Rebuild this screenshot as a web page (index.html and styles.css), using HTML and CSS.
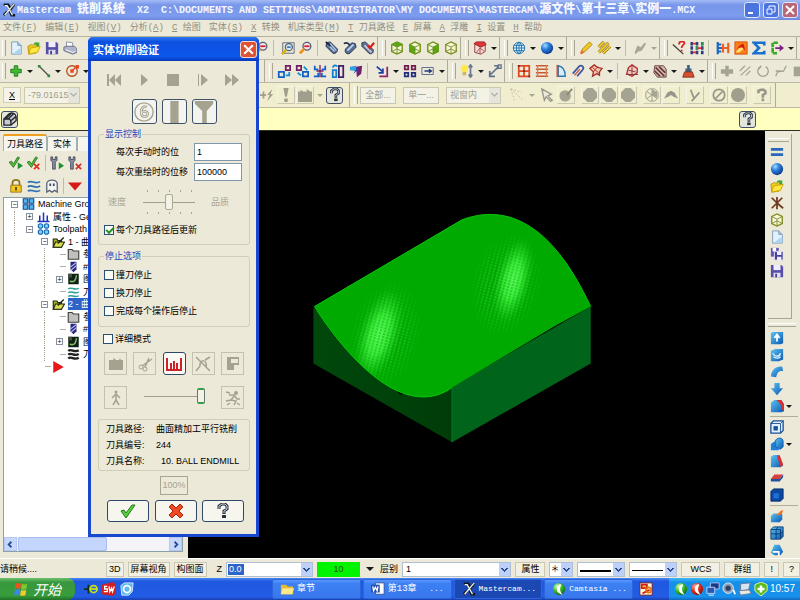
FILE: index.html
```html
<!DOCTYPE html>
<html lang="zh-CN">
<head>
<meta charset="utf-8">
<title>Mastercam 铣削系统 X2</title>
<link rel="stylesheet" href="styles.css">
</head>
<body>
<svg class="sprite" aria-hidden="true">
<defs>
<linearGradient id="gb" x1="0" y1="0" x2="1" y2="1"><stop offset="0" stop-color="#5cc4f4"/><stop offset="1" stop-color="#0a58b0"/></linearGradient>
<radialGradient id="gs" cx=".35" cy=".3" r=".8"><stop offset="0" stop-color="#a8dcff"/><stop offset=".4" stop-color="#2a80dc"/><stop offset="1" stop-color="#0a2c80"/></radialGradient>
<radialGradient id="gg" cx=".35" cy=".3" r=".8"><stop offset="0" stop-color="#d0ffb0"/><stop offset=".5" stop-color="#38b828"/><stop offset="1" stop-color="#106010"/></radialGradient>
<radialGradient id="gr" cx=".35" cy=".3" r=".8"><stop offset="0" stop-color="#ffb0a0"/><stop offset=".5" stop-color="#e02818"/><stop offset="1" stop-color="#801008"/></radialGradient>
</defs>
<symbol id="new" viewBox="0 0 16 16"><path d="M3 1h7l4 4v10H3z" fill="#e2f2fc" stroke="#7898b8"/><path d="M10 1v4h4" fill="#a8cce8" stroke="#7898b8"/><path d="M5 14h8V8z" fill="#a8d4f4"/></symbol>
<symbol id="open" viewBox="0 0 16 16"><path d="M1 6l4-2 2 1 5-2 1 4-3 7-8 1z" fill="#f0cc20" stroke="#b89010"/><path d="M4 8l11-2-3 7-10 2z" fill="#ffe83c" stroke="#c8a010"/><path d="M7 4c2-3 4-3 6-2l1-1v5h-4l1-2c-1-1-2 0-4 0" fill="#38a838"/></symbol>
<symbol id="save" viewBox="0 0 16 16"><path d="M1 1h12l2 2v12H1z" fill="#5850a8"/><path d="M4 1h8v6H4z" fill="#eef"/><path d="M4 10h8v5H4z" fill="#dde"/><path d="M6 11h2v4H6z" fill="#443c90"/></symbol>
<symbol id="saves" viewBox="0 0 16 16"><path d="M1 1h9v10H1z" fill="#6058b8"/><path d="M3 1h4v4H3z" fill="#fff"/><path d="M5 5h10v10H5z" fill="#4840a0" stroke="#eee"/><path d="M8 5h5v4H8zM8 11h5v4H8z" fill="#eef"/></symbol>
<symbol id="print" viewBox="0 0 16 16"><path d="M4 1l7 1v6H4z" fill="#fff" stroke="#8088a8"/><path d="M1 7l3-1h9l3 3v4l-5 2-10-4z" fill="#b0b4c8" stroke="#606880"/><path d="M3 10l8 3 3-1" stroke="#fff" fill="none"/></symbol>
<symbol id="zoomr" viewBox="0 0 16 16"><circle cx="9" cy="6" r="4.500" fill="#f4e4f0" stroke="#506078" stroke-width="1.500"/><path d="M6 9l-5 5" stroke="#f09010" stroke-width="3"/><path d="M6 6h6" stroke="#d02020" stroke-width="2"/></symbol>
<symbol id="zoomw" viewBox="0 0 16 16"><path d="M2 2h13v12H2z" fill="none" stroke="#506078"/><circle cx="9" cy="7" r="4" fill="#d4e8f4" stroke="#506078" stroke-width="1.500"/><path d="M6 10l-5 5" stroke="#e0b010" stroke-width="3"/><path d="M7 7h4" stroke="#2050a0" stroke-width="1.500"/></symbol>
<symbol id="torch" viewBox="0 0 16 16"><path d="M2 2l4-1 8 8c1 3-2 6-5 5L1 6z" fill="#506890" stroke="#20304c"/><path d="M3 4l8 8M6 3l7 8" stroke="#b8cce8" stroke-width="1.500"/><path d="M1 1l5 5" stroke="#182440" stroke-width="2"/></symbol>
<symbol id="torch2" viewBox="0 0 16 16"><path d="M3 9l7-7 4 1 1 4-7 7c-3 2-7-1-5-5z" fill="#587098" stroke="#20304c"/><path d="M5 11l7-7" stroke="#c4d8f0" stroke-width="2"/><path d="M1 3c3-2 5-1 7 2" fill="none" stroke="#20304c" stroke-width="2"/></symbol>
<symbol id="torch3" viewBox="0 0 16 16"><path d="M1 2l4-1 9 9c1 3-2 6-5 4L1 6z" fill="#607090" stroke="#283850"/><path d="M4 5l8 8" stroke="#ccd" stroke-width="2"/><path d="M8 5l2 3 5-6" stroke="#d82020" stroke-width="2.500" fill="none"/></symbol>
<symbol id="cubet" viewBox="0 0 16 16"><path d="M2 4l6-3 6 3v8l-6 3-6-3z" fill="#f2f4d8" stroke="#6c8c10" stroke-width="1.500"/><path d="M2 4l6-3 6 3-6 3z" fill="#58a818"/><path d="M2 4l6 3 6-3M8 7v8M2 12l6-3 6 3" fill="none" stroke="#6c8c10"/></symbol>
<symbol id="cubel" viewBox="0 0 16 16"><path d="M2 4l6-3 6 3v8l-6 3-6-3z" fill="#f2f4d8" stroke="#6c8c10" stroke-width="1.500"/><path d="M2 4l6 3v8l-6-3z" fill="#58a818"/><path d="M2 4l6 3 6-3M8 7v8M2 12l6-3 6 3" fill="none" stroke="#6c8c10"/></symbol>
<symbol id="cuber" viewBox="0 0 16 16"><path d="M2 4l6-3 6 3v8l-6 3-6-3z" fill="#f2f4d8" stroke="#6c8c10" stroke-width="1.500"/><path d="M14 4L8 7v8l6-3z" fill="#58a818"/><path d="M2 4l6 3 6-3M8 7v8M2 12l6-3 6 3" fill="none" stroke="#6c8c10"/></symbol>
<symbol id="cube" viewBox="0 0 16 16"><path d="M2 4l6-3 6 3v8l-6 3-6-3z" fill="#f6f6dc" stroke="#7c8c20" stroke-width="1.500"/><path d="M2 4l6 3 6-3M8 7v8M2 12l6-3 6 3" fill="none" stroke="#7c8c20"/></symbol>
<symbol id="cubered" viewBox="0 0 16 16"><path d="M2 4h12v8l-5 3-7-2z" fill="#f4dcd8" stroke="#903030"/><path d="M1 3l3-2h9l2 3-6 3z" fill="#e03838" stroke="#902020"/><path d="M8 7v8M4 13l4-5 5 4" fill="none" stroke="#a04848"/></symbol>
<symbol id="globe" viewBox="0 0 16 16"><circle cx="8" cy="8" r="6.500" fill="#dff0fa" stroke="#1870a8"/><ellipse cx="8" cy="8" rx="3" ry="6.500" fill="none" stroke="#1870a8"/><path d="M2 5h12M1 8h14M2 11h12M8 1v14" stroke="#1870a8"/></symbol>
<symbol id="ball" viewBox="0 0 16 16"><circle cx="8" cy="8" r="7" fill="url(#gs)"/></symbol>
<symbol id="pen" viewBox="0 0 16 16"><path d="M12 1l3 3-8 8-4 2 1-5z" fill="#f0c820" stroke="#a88010"/><path d="M3 10l3 3-3 2-2-1z" fill="#e87030"/></symbol>
<symbol id="pens" viewBox="0 0 16 16"><path d="M2 7l6-6M2 13L13 2M7 14l8-8" stroke="#987010" stroke-width="3.500"/><path d="M2 7l6-6M2 13L13 2M7 14l8-8" stroke="#f4d430" stroke-width="2"/></symbol>
<symbol id="gpen" viewBox="0 0 16 16"><path d="M2 13l3-8 4 2 4-5 2 1-5 8-4 1-3 3z" fill="#a8a694"/></symbol>
<symbol id="qline" viewBox="0 0 16 16"><path d="M1 4l12 11" stroke="#484030" stroke-width="1.500"/><path d="M8 4c0-5 7-4 6-1-1 2-3 2-3 5M11 10v2" fill="none" stroke="#d82020" stroke-width="2"/></symbol>
<symbol id="bars" viewBox="0 0 16 16"><path d="M2 1v14M8 1v14M14 1v14" stroke="#303c80" stroke-width="3" stroke-dasharray="4 1"/><path d="M3 3h4M9 8h4M3 13h4" stroke="#e03030" stroke-width="2"/><path d="M8 6v4M14 1v4" stroke="#30a050" stroke-width="2"/></symbol>
<symbol id="barsb" viewBox="0 0 16 16"><path d="M2 1v14M2 4h4M2 8h11M2 12h4" stroke="#1868c8" stroke-width="2.500"/><path d="M8 3v10M14 2v12M8 8h6" stroke="#f06020" stroke-width="2.500"/></symbol>
<symbol id="swoosh" viewBox="0 0 16 16"><path d="M1 1h14v14H1z" fill="#f88018" stroke="#d84808"/><path d="M3 12c1-6 4-8 8-9l2 8-4-4z" fill="#d81c10"/><path d="M2 13c3-6 6-7 9-4l-5 4z" fill="#ffe070"/></symbol>
<symbol id="sigma" viewBox="0 0 16 16"><path d="M14 5V2H2l6 6-6 6h12v-3" fill="none" stroke="#1870d0" stroke-width="3"/></symbol>
<symbol id="exit" viewBox="0 0 16 16"><path d="M9 2H3v12h6" fill="none" stroke="#38a828" stroke-width="3" stroke-dasharray="5 1"/><path d="M6 7h5V4l5 4-5 4V9H6z" fill="#802080"/></symbol>
<symbol id="plus" viewBox="0 0 16 16"><path d="M6 2h4v4h4v4h-4v4H6v-4H2V6h4z" fill="#40b830" stroke="#187818"/></symbol>
<symbol id="line" viewBox="0 0 16 16"><path d="M2 2l12 12" stroke="#405048" stroke-width="1.500"/><path d="M1 1h3v3H1zM12 12h3v3h-3z" fill="#308840"/></symbol>
<symbol id="arc" viewBox="0 0 16 16"><circle cx="8" cy="8" r="6" fill="none" stroke="#b05020" stroke-width="1.500"/><path d="M8 8l5-5" stroke="#e03020" stroke-width="1.500"/><path d="M6 6h4v4H6zM12 1h4v4h-4z" fill="#f04820"/></symbol>
<symbol id="x1" viewBox="0 0 16 16"><path d="M2 9h6v6H2z" fill="none" stroke="#1060c8" stroke-width="2"/><path d="M10 2h5v5h-5z" fill="none" stroke="#702060" stroke-width="2"/><path d="M14 9v4h-4" fill="none" stroke="#1090d0" stroke-width="2"/></symbol>
<symbol id="x2" viewBox="0 0 16 16"><path d="M2 2h5v5H2z" fill="none" stroke="#702060" stroke-width="2"/><path d="M9 9h6v5H9z" fill="none" stroke="#1060c8" stroke-width="2"/><path d="M3 10l4 3M10 3l4 4" stroke="#1090d0" stroke-width="2"/></symbol>
<symbol id="x3" viewBox="0 0 16 16"><path d="M2 2v4h4M14 2v4h-4M1 14h5v-4M15 14h-5v-4" fill="none" stroke="#1060c8" stroke-width="2"/><path d="M8 1v14M4 8h8" stroke="#702060" stroke-width="1.500"/></symbol>
<symbol id="x4" viewBox="0 0 16 16"><path d="M2 7h4v8H2zM2 4c1-3 4-3 5-1" fill="none" stroke="#1080d0" stroke-width="2"/><path d="M9 2h5v13H9z" fill="none" stroke="#402070" stroke-width="2"/></symbol>
<symbol id="x5" viewBox="0 0 16 16"><path d="M1 3l7-1v6L1 7z" fill="#30a0e0"/><path d="M8 3l7-1-1 9-5 4z" fill="#702070"/><path d="M5 11l4-7 2 2z" fill="#1050b0"/></symbol>
<symbol id="x6" viewBox="0 0 16 16"><path d="M2 3l7 6M9 5v5H4" fill="none" stroke="#1840a0" stroke-width="2"/><path d="M14 3v11H5" fill="none" stroke="#902070" stroke-width="2"/></symbol>
<symbol id="x7" viewBox="0 0 16 16"><path d="M2 2h4v4H2zM10 2h4v4h-4z" fill="none" stroke="#702050" stroke-width="2"/><path d="M2 10h4v4H2zM10 10h4v4h-4z" fill="none" stroke="#203080" stroke-width="2"/></symbol>
<symbol id="x8" viewBox="0 0 16 16"><path d="M1 4h13v8H1z" fill="none" stroke="#506088"/><path d="M4 8h7M9 6l3 2-3 2" fill="none" stroke="#203880" stroke-width="1.500"/></symbol>
<symbol id="bulb" viewBox="0 0 16 16"><circle cx="5" cy="5" r="4" fill="#ffe840"/><path d="M3 9h4v4H3z" fill="#d0b860"/><path d="M12 2v12M10 4l2-3 2 3M10 12l2 3 2-3" fill="none" stroke="#707890" stroke-width="2"/></symbol>
<symbol id="movexy" viewBox="0 0 16 16"><path d="M11 4L3 12M2 8v6h6" fill="none" stroke="#607088" stroke-width="2"/><path d="M7 2h4v4M12 1h3v4h-3z" fill="none" stroke="#607088" stroke-width="1.500"/></symbol>
<symbol id="s1" viewBox="0 0 16 16"><path d="M2 2h12v12H2zM8 2v12M2 8h12" fill="none" stroke="#e04820" stroke-width="2"/><path d="M7 7h2v2H7zM1 1h2v2H1zM13 13h2v2h-2z" fill="#702020"/></symbol>
<symbol id="s2" viewBox="0 0 16 16"><path d="M1 2h14M1 6h14M1 10h14M1 14h14" stroke="#c85830" stroke-width="1.500"/><path d="M3 1v14M13 1v14" stroke="#d88050" stroke-width="1.500"/></symbol>
<symbol id="s3" viewBox="0 0 16 16"><path d="M6 2c6 1 8 6 8 12H6z" fill="#d8ecf8" stroke="#2878b0" stroke-width="1.500"/><path d="M5 1v14" stroke="#d05030" stroke-width="2"/></symbol>
<symbol id="s4" viewBox="0 0 16 16"><path d="M2 11L9 3c3-3 7 1 4 4l-6 7" fill="none" stroke="#4058a0" stroke-width="2"/><path d="M4 13l6-7" stroke="#d05040" stroke-width="1.500"/></symbol>
<symbol id="s5" viewBox="0 0 16 16"><path d="M1 5l5-4 4 3 5 1-3 4v4l-3-2-5 3 1-5z" fill="#f0c8b0" stroke="#a83028" stroke-width="1.500"/><path d="M4 4l8 7M5 9l5-6" stroke="#a83028"/></symbol>
<symbol id="s6" viewBox="0 0 16 16"><path d="M4 4l4-3 6 4v5l-6 4-6-3z" fill="#f0c8c0" stroke="#b03030" stroke-width="1.500"/><path d="M1 12h14M4 7l8 2M8 2v11" stroke="#803030"/></symbol>
<symbol id="s7" viewBox="0 0 16 16"><path d="M2 2h10l3 4v9H5l-4-5z" fill="#d8b8b0" stroke="#603838"/><path d="M3 4l10 10M7 3l7 7M2 8l6 6" stroke="#603838" stroke-width="2"/></symbol>
<symbol id="s8" viewBox="0 0 16 16"><path d="M7 1h3v4h2v4H5V5h2z" fill="#406080"/><path d="M4 9h9l2 6H2z" fill="#d85030" stroke="#803018"/></symbol>
<symbol id="g1" viewBox="0 0 16 16"><path d="M6 2h4v4h5v5h-5v3H6v-3H1V6h5z" fill="#a5a392"/></symbol>
<symbol id="g2" viewBox="0 0 16 16"><path d="M2 8l6-6M3 13L14 3M9 13l5-5" stroke="#a5a392" stroke-width="1.500"/></symbol>
<symbol id="g3" viewBox="0 0 16 16"><path d="M5 3a6 6 0 1 0 6 0M3 6l3-4" fill="none" stroke="#a5a392" stroke-width="1.500"/></symbol>
<symbol id="g4" viewBox="0 0 16 16"><path d="M2 14c2-7 4-5 9-6l3-6M2 8h6" fill="none" stroke="#a5a392" stroke-width="1.500"/></symbol>
<symbol id="g5" viewBox="0 0 16 16"><path d="M2 3h12v11H2z" fill="#a5a392"/></symbol>
<symbol id="bolt" viewBox="0 0 16 16"><path d="M0 7h3V4h2v3h2v2H5v3H3V9H0zM14 1L8 8h3l-3 7 7-8h-3z" fill="#a09e8c"/></symbol>
<symbol id="bang" viewBox="0 0 16 16"><path d="M5 0h6l-2 10H7zM6 12h4v4H6z" fill="#a09e8c"/></symbol>
<symbol id="clip" viewBox="0 0 16 16"><path d="M0 4h3V2l3 2h4V1l4 3h2v12H0z" fill="#a09e8c"/></symbol>
<symbol id="help" viewBox="0 0 16 16"><path d="M4 6V3l3-2h3l2 2v3L9 8v3" fill="none" stroke="#28303c" stroke-width="3"/><path d="M4 6V3l3-2h3l2 2v3L9 8v2" fill="none" stroke="#c8d4e8"/><path d="M7 12h4v3H7z" fill="#28303c"/></symbol>
<symbol id="cursor" viewBox="0 0 16 16"><path d="M2 1l11 6-4 2 5 5-2 1-5-5-2 4z" fill="#ece9d8" stroke="#98968a" stroke-width="1.500"/></symbol>
<symbol id="hex" viewBox="0 0 16 16"><path d="M5 0h6l5 5v6l-5 5H5l-5-5V5z" fill="#a5a392"/></symbol>
<symbol id="hexp" viewBox="0 0 16 16"><circle cx="7" cy="9" r="6.500" fill="#a5a392"/><path d="M9 8l6-7" stroke="#88867a" stroke-width="2"/></symbol>
<symbol id="pie" viewBox="0 0 16 16"><path d="M5 1h6l4 4v6l-4 4H5l-4-4V5zM8 1v14M2 4l12 8M14 4L2 12" fill="none" stroke="#98968a"/><path d="M8 8V1l6 4v6z" fill="#a5a392"/></symbol>
<symbol id="cap" viewBox="0 0 16 16"><path d="M0 12l4-7 4-2 4 2 4 7-5-2-3-2-3 2z" fill="#98968a"/></symbol>
<symbol id="tri" viewBox="0 0 16 16"><path d="M3 2l4 10 6-7M7 12l-3 3" fill="none" stroke="#98968a" stroke-width="2"/></symbol>
<symbol id="no" viewBox="0 0 16 16"><circle cx="8" cy="8" r="6.500" fill="none" stroke="#98968a" stroke-width="2"/><path d="M4 12l8-8" stroke="#98968a" stroke-width="2"/></symbol>
<symbol id="disc" viewBox="0 0 16 16"><circle cx="8" cy="8" r="8" fill="#a09e8c"/></symbol>
<symbol id="helpg" viewBox="0 0 16 16"><path d="M4 6V3l3-1h3l2 2v2L9 8v3M9 12v3" fill="none" stroke="#98968a" stroke-width="3"/></symbol>
<symbol id="ghost" viewBox="0 0 16 16"><path d="M1 1l13 12M1 1l4 13M1 1l12 4" stroke="#b8b6a0" stroke-dasharray="2 2"/></symbol>
<symbol id="solid" viewBox="0 0 16 16"><path d="M1 8l6-6c4-2 8 0 8 4v4l-6 5H1z" fill="#c8ccd0" stroke="#202428" stroke-width="1.500"/><path d="M1 8h6c3 1 2 4 2 7M3 8l6-6M6 8l6-6M9 10l6-5" fill="none" stroke="#202428" stroke-width="1.500"/></symbol>
<symbol id="chk" viewBox="0 0 16 16"><path d="M1 8l3-1 2 3 6-8 3 0-9 13z" fill="#58d040" stroke="#207818"/></symbol>
<symbol id="chkgo" viewBox="0 0 16 16"><path d="M0 7l3-1 2 3 5-8 2 1-7 11z" fill="#58b840" stroke="#287820"/><path d="M10 7l6 4-6 4z" fill="#209030"/></symbol>
<symbol id="chkx" viewBox="0 0 16 16"><path d="M0 7l3-1 2 3 5-8 2 1-7 11z" fill="#58b840" stroke="#287820"/><path d="M8 9l6 6M14 9l-6 6" stroke="#e03020" stroke-width="2"/></symbol>
<symbol id="toolgo" viewBox="0 0 16 16"><path d="M1 1h2v3h3V1h2v4L6 7v8H3V7L1 5z" fill="#8890a0" stroke="#404858"/><path d="M10 7l6 4-6 4z" fill="#209030"/></symbol>
<symbol id="toolx" viewBox="0 0 16 16"><path d="M1 1h2v3h3V1h2v4L6 7v8H3V7L1 5z" fill="#8890a0" stroke="#404858"/><path d="M9 9l6 6M15 9l-6 6" stroke="#d03030" stroke-width="2"/></symbol>
<symbol id="lock" viewBox="0 0 16 16"><path d="M4 8V4c0-4 8-4 8 0v4" fill="none" stroke="#907818" stroke-width="2"/><path d="M2 7h12v8H2z" fill="#f4c820" stroke="#907010"/><path d="M7 9h2v4H7z" fill="#604808"/></symbol>
<symbol id="waves" viewBox="0 0 16 16"><path d="M1 4c4-4 8 3 14-1M1 9c4-4 8 3 14-1M1 14c4-4 8 3 14-1" fill="none" stroke="#2870b0" stroke-width="2"/></symbol>
<symbol id="wavet" viewBox="0 0 16 16"><path d="M1 4c4-4 8 3 14-1M1 9c4-4 8 3 14-1M1 14c4-4 8 3 14-1" fill="none" stroke="#30a098" stroke-width="2"/></symbol>
<symbol id="wavek" viewBox="0 0 16 16"><path d="M1 4c4-4 8 3 14-1M1 9c4-4 8 3 14-1M1 14c4-4 8 3 14-1" fill="none" stroke="#202020" stroke-width="3"/></symbol>
<symbol id="spook" viewBox="0 0 16 16"><path d="M2 15V5c1-5 11-5 12 0v10l-3-2-3 2-3-2z" fill="#f4f4f4" stroke="#606878" stroke-width="1.500"/><path d="M5 5h2v3H5zM9 5h2v3H9z" fill="#404858"/></symbol>
<symbol id="down" viewBox="0 0 16 16"><path d="M0 4h16l-8 9z" fill="#d81818"/></symbol>
<symbol id="grid4" viewBox="0 0 16 16"><path d="M1 1h6v6H1zM9 1h6v6H9zM1 9h6v6H1zM9 9h6v6H9z" fill="#50b8f0" stroke="#184890" stroke-width="1.500"/></symbol>
<symbol id="circ4" viewBox="0 0 16 16"><g fill="#80d0f8" stroke="#1868b0" stroke-width="1.500"><circle cx="4" cy="4" r="3"/><circle cx="12" cy="4" r="3"/><circle cx="4" cy="12" r="3"/><circle cx="12" cy="12" r="3"/></g></symbol>
<symbol id="prop" viewBox="0 0 16 16"><path d="M0 14h16M3 14V6M8 14V2M13 14V6" stroke="#2030c0" stroke-width="2"/></symbol>
<symbol id="fold" viewBox="0 0 16 16"><path d="M1 4h5l1 2h5v9H1z" fill="#a8b030" stroke="#202810" stroke-width="1.500"/><path d="M4 8h12l-4 7H1z" fill="#dcdc50" stroke="#202810" stroke-width="1.500"/><path d="M7 10l8-8" stroke="#202810" stroke-width="2"/></symbol>
<symbol id="foldg" viewBox="0 0 16 16"><path d="M1 2h5l2 2h7v11H1z" fill="#c0c0bc" stroke="#404040" stroke-width="1.500"/></symbol>
<symbol id="mill" viewBox="0 0 16 16"><path d="M4 1h8v10l-4 4-4-4z" fill="#282878"/><path d="M4 8l8-6M5 12l7-6" stroke="#b0b4f0" stroke-width="1.500"/></symbol>
<symbol id="geo" viewBox="0 0 16 16"><path d="M1 1h14v14H1z" fill="#102018"/><path d="M3 11c7 2 8-2 9-8" fill="none" stroke="#80c060" stroke-width="2"/><path d="M1 1h5v5H1z" fill="#40503c"/></symbol>
<symbol id="redgo" viewBox="0 0 16 16"><path d="M1 0l14 8-14 8z" fill="#e81818"/></symbol>
<symbol id="eq" viewBox="0 0 16 16"><path d="M1 5h14M1 11h14" stroke="#2868b8" stroke-width="3"/></symbol>
<symbol id="axes" viewBox="0 0 16 16"><path d="M8 8V1M8 8l6-6M8 8L2 2M8 8l7 6M8 8l-6 6M8 8v7" stroke="#703820" stroke-width="2"/></symbol>
<symbol id="bup" viewBox="0 0 16 16"><path d="M1 2l3-1h11v13l-3 1H1z" fill="url(#gb)"/><path d="M8 12V6M5 8l3-4 3 4" fill="none" stroke="#fff" stroke-width="2"/></symbol>
<symbol id="brev" viewBox="0 0 16 16"><path d="M1 3l5-2h9v12l-5 2H1z" fill="url(#gb)"/><path d="M3 6c3 5 8 4 9 0M4 10c3 2 6 2 8 0" fill="none" stroke="#e0f4ff" stroke-width="1.500"/></symbol>
<symbol id="bcurve" viewBox="0 0 16 16"><path d="M1 13C2 5 7 1 14 2l1 5c-5-1-7 2-8 7z" fill="url(#gb)"/></symbol>
<symbol id="bdown" viewBox="0 0 16 16"><path d="M5 1h6v6h4l-7 8-7-8h4z" fill="url(#gb)"/></symbol>
<symbol id="bred" viewBox="0 0 16 16"><path d="M1 4l4-3h8l3 5v8l-3 1H1z" fill="url(#gb)"/><path d="M7 1h6l3 5v7l-3-1c1-5-2-8-6-11z" fill="#d83030"/></symbol>
<symbol id="bbox" viewBox="0 0 16 16"><path d="M1 4l3-3h11v11l-3 3H1z" fill="#e0f0fc" stroke="#185090" stroke-width="1.500"/><path d="M1 4h11v11M12 4l3-3" fill="none" stroke="#185090"/><path d="M4 7h5v5H4z" fill="#185090"/></symbol>
<symbol id="bbool" viewBox="0 0 16 16"><path d="M1 8l4-3h5v10H1z" fill="#2080d8"/><path d="M6 11V5c1-5 9-5 9 0v6l-3 3z" fill="url(#gb)" stroke="#1060b0"/></symbol>
<symbol id="bdraft" viewBox="0 0 16 16"><path d="M1 3l3-2h6l5 12-3 2H1z" fill="url(#gb)"/><path d="M8 2l3-1 4 11-3 3z" fill="#d83030"/></symbol>
<symbol id="bplate" viewBox="0 0 16 16"><path d="M1 9l4-5h10l-4 5z" fill="#d84038"/><path d="M1 9h10v3H1zM11 9l4-5v3l-4 5z" fill="#2050a0"/></symbol>
<symbol id="bblock" viewBox="0 0 16 16"><path d="M1 4l3-3h11v11l-3 3H1z" fill="#0c48a0" stroke="#062c68"/><path d="M4 6h6v6H4z" fill="#2070d8"/></symbol>
<symbol id="bflame" viewBox="0 0 16 16"><path d="M1 8l3-3h10v7l-3 3H1z" fill="url(#gb)"/><path d="M6 6c4 1 4-4 9-5-1 5-4 8-9 5" fill="#f07020"/></symbol>
<symbol id="bgrid" viewBox="0 0 16 16"><path d="M1 4l3-3h11v11l-3 3H1z" fill="url(#gb)" stroke="#0c3870"/><path d="M1 9h11l3-3M7 15V4l2-3M12 15V4H1" fill="none" stroke="#0c3870"/></symbol>
<symbol id="bprint" viewBox="0 0 16 16"><path d="M5 2h6l4 8-3 4H5l-4-3z" fill="url(#gb)"/><path d="M3 10h7v5" fill="none" stroke="#fff" stroke-width="2"/></symbol>
<symbol id="mcx" viewBox="0 0 16 16"><path d="M2 2h5l3 5 4-6M2 14l4-4M8 7l3 7h4" fill="none" stroke="#101820" stroke-width="3"/><path d="M3 3h3l6 11M14 1L3 14" stroke="#f0f4e8" fill="none" stroke-width="1.500"/></symbol>
<symbol id="hol" viewBox="0 0 16 16"><path d="M0 8h5M5 3v10" stroke="#103018" stroke-width="2"/><circle cx="11" cy="8" r="4" fill="none" stroke="#c8e020" stroke-width="2"/><path d="M7 8h8" stroke="#c8e020" stroke-width="2"/></symbol>
<symbol id="sw" viewBox="0 0 16 16"><path d="M0 3l12-3 4 3v10l-4 3L0 14z" fill="#d02020"/><path d="M6 5H3v3h3v3H2M8 5l1 6 2-4 1 4 2-6" fill="none" stroke="#fff" stroke-width="1.500"/></symbol>
<symbol id="cd" viewBox="0 0 16 16"><path d="M1 4l4-3h10l-1 10-4 4H2z" fill="#60b8f0" stroke="#d8f0ff"/><circle cx="8" cy="8" r="4" fill="none" stroke="#fff" stroke-width="2"/></symbol>
<symbol id="folder" viewBox="0 0 16 16"><path d="M1 3h6l2 2h6v9H1z" fill="#e8b830"/><path d="M3 7h13l-2 7H1z" fill="#ffe888"/></symbol>
<symbol id="word" viewBox="0 0 16 16"><path d="M5 1h10v13H5z" fill="#fff" stroke="#3050a0"/><path d="M0 3h10v9H0z" fill="#2850a8"/><path d="M2 5l1 5 2-4 2 4 1-5" fill="none" stroke="#fff" stroke-width="1.500"/></symbol>
<symbol id="cam" viewBox="0 0 16 16"><circle cx="8" cy="8" r="7" fill="url(#gg)"/><path d="M10 3c-5 2-5 8 0 10-2-3-2-7 0-10" fill="#fff" stroke="#fff" stroke-width="1.500"/></symbol>
<symbol id="camr" viewBox="0 0 16 16"><circle cx="8" cy="8" r="7" fill="url(#gr)"/><path d="M10 3c-5 2-5 8 0 10-2-3-2-7 0-10" fill="#fff" stroke="#fff" stroke-width="1.500"/></symbol>
<symbol id="eapp" viewBox="0 0 16 16"><path d="M1 1h14v14H1z" fill="#fff8d8" stroke="#701820"/><path d="M3 3h6v4H3zM4 13l8-4" stroke="#d02020" stroke-width="2" fill="#f0c020"/><circle cx="11" cy="9" r="3" fill="none" stroke="#e87010" stroke-width="2"/></symbol>
<symbol id="net" viewBox="0 0 16 16"><path d="M5 1h10v7H5z" fill="#183880" stroke="#b8d0ff"/><path d="M1 6h9v7H1z" fill="#2858b0" stroke="#c8dcff"/><path d="M3 15h6" stroke="#fff"/></symbol>
<symbol id="vol" viewBox="0 0 16 16"><circle cx="7" cy="7" r="6" fill="#90a0b8" stroke="#e8f0ff"/><circle cx="7" cy="7" r="3" fill="#304060"/><path d="M13 9l2 5" stroke="#fff" stroke-width="2"/></symbol>
<symbol id="scan" viewBox="0 0 16 16"><path d="M3 2l11-1-2 8-9 1z" fill="#d8e4f0" stroke="#687890"/><path d="M1 10l12-1 2 4-12 2z" fill="#e8ece8" stroke="#687890"/></symbol>
<symbol id="shield" viewBox="0 0 16 16"><path d="M8 0l7 3v7l-7 6-7-6V3z" fill="#58b820" stroke="#f0f8a0"/><path d="M8 4v8M4 8h8" stroke="#fff" stroke-width="3"/></symbol>
<symbol id="win" viewBox="0 0 16 16"><path d="M2 2c2-1 4-1 6 0L7 8c-2-1-4-1-6 0z" fill="#f05020"/><path d="M9 2c2 1 4 1 6 0l-1 6c-2 1-4 1-6 0z" fill="#80c830"/><path d="M1 9c2-1 4-1 6 0l-1 6c-2-1-4-1-6 0z" fill="#3888f0"/><path d="M8 9c2 1 4 1 6 0l-1 6c-2 1-4 1-6 0z" fill="#f8c828"/></symbol>
<symbol id="rew" viewBox="0 0 16 16"><path d="M1 2h2v12H1zM9 2v12L3 8zM15 2v12L9 8z" fill="#a5a290"/></symbol>
<symbol id="play" viewBox="0 0 16 16"><path d="M5 2l7 6-7 6z" fill="#a5a290"/></symbol>
<symbol id="stop" viewBox="0 0 16 16"><path d="M2 2h12v12H2z" fill="#a5a290"/></symbol>
<symbol id="step" viewBox="0 0 16 16"><path d="M3 2h1v12H3zM6 2l7 6-7 6z" fill="#a5a290"/></symbol>
<symbol id="ff" viewBox="0 0 16 16"><path d="M1 2l7 6-7 6zM8 2l7 6-7 6z" fill="#a5a290"/></symbol>
<symbol id="v1" viewBox="0 0 24 24"><circle cx="12" cy="12" r="10" fill="none" stroke="#a5a290" stroke-width="1.500"/><path d="M15 7c-3-2-6 0-6 5 0 7 7 6 7 2s-7-3-7 0" fill="none" stroke="#a5a290" stroke-width="3"/><path d="M15 7c-3-2-6 0-6 5 0 7 7 6 7 2s-7-3-7 0" fill="none" stroke="#f4f4ee"/></symbol>
<symbol id="v2" viewBox="0 0 24 24"><path d="M8 0h9v24H8z" fill="#a5a290"/></symbol>
<symbol id="v3" viewBox="0 0 24 24"><path d="M2 0h20v3l-7 8v13h-5V11L2 3z" fill="#a5a290"/></symbol>
<symbol id="ruler" viewBox="0 0 16 16"><path d="M1 2v12h14V2M5 14V7M8 14V5M11 14V7" fill="none" stroke="#d02028" stroke-width="2"/></symbol>
<symbol id="blob" viewBox="0 0 16 16"><path d="M1 4h4l1-2 2 2h3l1-2 1 2h2v10H1z" fill="#a5a290"/></symbol>
<symbol id="cut" viewBox="0 0 16 16"><circle cx="4" cy="11" r="2" fill="none" stroke="#a5a290"/><circle cx="8" cy="13" r="2" fill="none" stroke="#a5a290"/><path d="M5 10l10-7M8 11l4-9" stroke="#a5a290" stroke-width="1.500"/></symbol>
<symbol id="flip" viewBox="0 0 16 16"><path d="M1 1l14 14M1 15l4-5c-1-7 8-7 6 1M10 4l5-3" fill="none" stroke="#a5a290" stroke-width="1.500"/></symbol>
<symbol id="gsave" viewBox="0 0 16 16"><path d="M2 1h12v13H2z" fill="#a5a290"/><path d="M6 3h7v4H6zM9 9h5v5H9z" fill="#ece9d8"/></symbol>
<symbol id="walk" viewBox="0 0 16 16"><circle cx="8" cy="2" r="1.500" fill="#a5a290"/><path d="M8 4v6l-3 5M8 10l3 5M4 8l4-4 4 4" fill="none" stroke="#a5a290" stroke-width="1.500"/></symbol>
<symbol id="run" viewBox="0 0 16 16"><circle cx="11" cy="3" r="2" fill="#a5a290"/><path d="M10 5l-4 5-5 1M6 10l5 1-2 4M4 5l5 0 3 4h3M1 2l4 1M2 15l3-2M12 13l3 2" fill="none" stroke="#a5a290" stroke-width="1.500"/></symbol>
<symbol id="redx" viewBox="0 0 16 16"><path d="M1 4l3-3 4 4 4-4 3 3-4 4 4 4-3 3-4-4-4 4-3-3 4-4z" fill="#f04820" stroke="#a82810"/></symbol>
</svg>

<header class="title">
  <svg class="ic"><use href="#mcx"/></svg>
  <h1><span>Mastercam</span> <b>铣削系统</b>&nbsp; X2&nbsp; C:\DOCUMENTS AND SETTINGS\ADMINISTRATOR\MY DOCUMENTS\MASTERCAM\<b>源文件</b>\<b>第十三章</b>\<b>实例一</b>.MCX</h1>
  <div class="winbtns">
    <button aria-label="最小化"><svg viewBox="0 0 14 14"><path d="M3 10h5" stroke="#fff" stroke-width="2"/></svg></button>
    <button aria-label="还原"><svg viewBox="0 0 14 14"><path d="M5 5V3h6v6H9M3 6h5v5H3z" fill="none" stroke="#fff"/></svg></button>
    <button class="x" aria-label="关闭"><svg viewBox="0 0 14 14"><path d="M3 3l8 8M11 3l-8 8" stroke="#fff" stroke-width="2"/></svg></button>
  </div>
</header>

<nav class="menu">
  <a href="#">文件(<u>F</u>)</a><a href="#">编辑(<u>E</u>)</a><a href="#">视图(<u>V</u>)</a><a href="#">分析(<u>A</u>)</a><a href="#"><u>C</u> 绘图</a><a href="#">实体(<u>S</u>)</a><a href="#"><u>X</u> 转换</a><a href="#">机床类型(<u>M</u>)</a><a href="#"><u>T</u> 刀具路径</a><a href="#"><u>E</u> 屏幕</a><a href="#"><u>A</u> 浮雕</a><a href="#"><u>I</u> 设置</a><a href="#"><u>H</u> 帮助</a>
</nav>

<div class="bar">
  <div class="grp lead">
    <svg class="t"><use href="#new"/></svg><svg class="t"><use href="#open"/></svg><svg class="t"><use href="#save"/></svg><svg class="t"><use href="#print"/></svg>
    <span class="fill"></span>
    <svg class="t"><use href="#zoomr"/></svg><i class="sep"></i><svg class="t"><use href="#zoomw"/></svg><svg class="t"><use href="#zoomr"/></svg><i class="sep"></i><svg class="t"><use href="#torch"/></svg><svg class="t"><use href="#torch2"/></svg><svg class="t"><use href="#torch3"/></svg>
  </div>
  <div class="grp"><svg class="t"><use href="#cubet"/></svg><svg class="t"><use href="#cubel"/></svg><svg class="t"><use href="#cuber"/></svg><svg class="t"><use href="#cube"/></svg></div>
  <div class="grp"><svg class="t"><use href="#cubered"/></svg><i class="dd"></i></div>
  <div class="grp"><svg class="t"><use href="#globe"/></svg><i class="dd"></i><svg class="t"><use href="#ball"/></svg><i class="dd"></i></div>
  <div class="grp"><svg class="t"><use href="#pen"/></svg><svg class="t"><use href="#pens"/></svg><i class="dd"></i><i class="sep"></i><svg class="t"><use href="#gpen"/></svg><i class="dd off"></i></div>
  <div class="grp last"><svg class="t"><use href="#qline"/></svg><svg class="t"><use href="#bars"/></svg><i class="sep"></i><svg class="t"><use href="#barsb"/></svg><svg class="t"><use href="#swoosh"/></svg><svg class="t"><use href="#sigma"/></svg><svg class="t"><use href="#exit"/></svg><i class="dd"></i></div>
</div>

<div class="bar">
  <div class="grp lead">
    <svg class="t"><use href="#plus"/></svg><i class="dd"></i><svg class="t"><use href="#line"/></svg><i class="dd"></i><svg class="t"><use href="#arc"/></svg><i class="dd"></i>
  </div>
  <div class="grp"><svg class="t"><use href="#x1"/></svg><svg class="t"><use href="#x2"/></svg><svg class="t"><use href="#x3"/></svg><svg class="t"><use href="#x4"/></svg><svg class="t"><use href="#x5"/></svg><i class="sep"></i><svg class="t"><use href="#x6"/></svg><i class="dd"></i><svg class="t"><use href="#x7"/></svg><svg class="t"><use href="#x8"/></svg><i class="dd"></i></div>
  <div class="grp"><svg class="t"><use href="#bulb"/></svg><i class="dd"></i><svg class="t"><use href="#movexy"/></svg></div>
  <div class="grp"><svg class="t"><use href="#s1"/></svg><svg class="t"><use href="#s2"/></svg><svg class="t"><use href="#s3"/></svg><svg class="t"><use href="#s4"/></svg><svg class="t"><use href="#s5"/></svg><i class="dd"></i><i class="sep"></i><svg class="t"><use href="#s6"/></svg><i class="dd"></i><svg class="t"><use href="#s7"/></svg><i class="dd"></i><svg class="t"><use href="#s8"/></svg><i class="dd"></i></div>
  <div class="grp cutoff"><svg class="t"><use href="#g1"/></svg><svg class="t"><use href="#g2"/></svg><svg class="t"><use href="#g3"/></svg><svg class="t"><use href="#g4"/></svg><svg class="t"><use href="#g5"/></svg></div>
</div>

<div class="bar ribbon">
  <div class="lead3">
    <button class="key">X</button>
    <span class="combo off coord"><select disabled aria-label="X 坐标"><option>-79.01615</option></select></span>
    <span class="fill"></span>
    <svg class="t"><use href="#bolt"/></svg><svg class="t raised"><use href="#bang"/></svg><svg class="t raised"><use href="#clip"/></svg><i class="dd off"></i>
    <button class="q" aria-label="帮助"><svg class="ic"><use href="#help"/></svg></button>
  </div>
  <div class="grp sel">
    <button class="txt" disabled>全部...</button><button class="txt" disabled>单一...</button>
    <span class="combo off scope"><select disabled aria-label="选择范围"><option>视窗内</option></select></span>
    <svg class="t"><use href="#ghost"/></svg><i class="dd off"></i>
    <svg class="t"><use href="#cursor"/></svg><svg class="t raised"><use href="#hexp"/></svg><i class="sep none"></i>
    <svg class="t raised"><use href="#hex"/></svg><svg class="t raised"><use href="#hex"/></svg><svg class="t raised"><use href="#hex"/></svg><i class="sep none"></i>
    <svg class="t raised"><use href="#pie"/></svg><svg class="t raised"><use href="#cap"/></svg><i class="sep none"></i>
    <svg class="t raised"><use href="#tri"/></svg><i class="sep none"></i>
    <svg class="t raised"><use href="#no"/></svg><svg class="t raised"><use href="#disc"/></svg><i class="sep none"></i>
    <svg class="t raised"><use href="#helpg"/></svg>
  </div>
</div>

<div class="strip">
  <button class="q" aria-label="实体"><svg class="ic"><use href="#solid"/></svg></button>
  <button class="q" aria-label="帮助"><svg class="ic"><use href="#help"/></svg></button>
</div>

<main class="work">
  <aside class="panel">
    <div class="tabs"><button class="on">刀具路径</button><button>实体</button><button></button></div>
    <div class="ops"><svg class="ic"><use href="#chkgo"/></svg><svg class="ic"><use href="#chkx"/></svg><i class="sep"></i><svg class="ic"><use href="#toolgo"/></svg><svg class="ic"><use href="#toolx"/></svg></div>
    <div class="ops"><svg class="ic"><use href="#lock"/></svg><svg class="ic"><use href="#waves"/></svg><svg class="ic"><use href="#spook"/></svg><i class="sep"></i><svg class="ic"><use href="#down"/></svg></div>
    <div class="treebox">
    <ul class="tree">
      <li><i class="ex">−</i><svg class="ic"><use href="#grid4"/></svg>Machine Group-1</li>
      <li><i class="g"></i><i class="ex">+</i><svg class="ic"><use href="#prop"/></svg>属性 - Generic Mill</li>
      <li><i class="g"></i><i class="ex">−</i><svg class="ic"><use href="#circ4"/></svg>Toolpath Group-1</li>
      <li><i class="g n"></i><i class="g n"></i><i class="ex">−</i><svg class="ic"><use href="#fold"/></svg>1 - 曲面精加工</li>
      <li><i class="g n"></i><i class="g n"></i><i class="g"></i><i class="g h"></i><svg class="ic"><use href="#foldg"/></svg>参数</li>
      <li><i class="g n"></i><i class="g n"></i><i class="g"></i><i class="g h"></i><svg class="ic"><use href="#mill"/></svg>#1</li>
      <li><i class="g n"></i><i class="g n"></i><i class="g"></i><i class="ex">+</i><svg class="ic"><use href="#geo"/></svg>图形</li>
      <li><i class="g n"></i><i class="g n"></i><i class="g"></i><i class="g h"></i><svg class="ic"><use href="#wavet"/></svg>刀具路径</li>
      <li><i class="g n"></i><i class="g n"></i><i class="ex">−</i><svg class="ic"><use href="#fold"/></svg><mark>2 - 曲面</mark></li>
      <li><i class="g n"></i><i class="g n"></i><i class="g"></i><i class="g h"></i><svg class="ic"><use href="#foldg"/></svg>参数</li>
      <li><i class="g n"></i><i class="g n"></i><i class="g"></i><i class="g h"></i><svg class="ic"><use href="#mill"/></svg>#1</li>
      <li><i class="g n"></i><i class="g n"></i><i class="g"></i><i class="ex">+</i><svg class="ic"><use href="#geo"/></svg>图形</li>
      <li><i class="g n"></i><i class="g n"></i><i class="g"></i><i class="g h"></i><svg class="ic"><use href="#wavek"/></svg>刀具路径</li>
      <li><i class="g n"></i><i class="g n"></i><i class="g h"></i><svg class="ic"><use href="#redgo"/></svg></li>
    </ul>
    <div class="hscroll"><button aria-label="向左"><svg viewBox="0 0 12 12"><path d="M7 3L4 6l3 3" fill="none" stroke="#284c98" stroke-width="2"/></svg></button><i class="thumb"></i><button aria-label="向右"><svg viewBox="0 0 12 12"><path d="M5 3l3 3-3 3" fill="none" stroke="#284c98" stroke-width="2"/></svg></button></div>
    </div>
  </aside>

  <section class="view">
    <svg viewBox="188 130 577 428" role="img" aria-label="切削后的实体模型">
      <defs>
        <radialGradient id="shine"><stop offset="0" stop-color="#5cff5c"/><stop offset=".4" stop-color="#40f440" stop-opacity=".9"/><stop offset=".7" stop-color="#20d020" stop-opacity=".5"/><stop offset="1" stop-color="#00a800" stop-opacity="0"/></radialGradient>
        <radialGradient id="haze"><stop offset="0" stop-color="#fff"/><stop offset=".6" stop-color="#999"/><stop offset="1" stop-color="#000"/></radialGradient>
        <linearGradient id="front" x1="0" x2="1"><stop offset="0" stop-color="#00480c"/><stop offset="1" stop-color="#003c08"/></linearGradient>
        <pattern id="dots" width="4" height="3" patternUnits="userSpaceOnUse" patternTransform="rotate(15)"><path d="M0 1h2" stroke="#089808"/><path d="M2 2h2" stroke="#38e838"/></pattern>
        <mask id="m1"><ellipse cx="385" cy="334" rx="36" ry="56" fill="url(#haze)" transform="rotate(14 385 334)"/></mask>
        <mask id="m2"><ellipse cx="506" cy="284" rx="36" ry="54" fill="url(#haze)" transform="rotate(14 506 284)"/></mask>
        <clipPath id="topc"><path d="M314 306L462 219C505 203 551 220 591 306L556 325 452 387C416 413 366 386 314 306z"/></clipPath>
      </defs>
      <path d="M313 307V363L452 442V386L400 394z" fill="url(#front)"/>
      <path d="M591 306V363L452 442V386z" fill="#00641a"/>
      <path d="M314 306L462 219C505 203 551 220 591 306L556 325 452 387C416 413 366 386 314 306z" fill="#00aa00"/>
      <g clip-path="url(#topc)">
        <ellipse cx="379" cy="334" rx="23" ry="52" fill="url(#shine)" transform="rotate(18 379 334)"/>
        <ellipse cx="513" cy="280" rx="20" ry="48" fill="url(#shine)" transform="rotate(14 513 280)"/>
        <path d="M330 260h110v150H330z" fill="url(#dots)" mask="url(#m1)"/>
        <path d="M455 210h110v150H455z" fill="url(#dots)" mask="url(#m2)"/>
      </g>
      <path d="M314 306L462 219C505 203 551 220 591 306M452 387C416 413 366 386 314 306" fill="none" stroke="#08c808"/>
      <path d="M452 387v55" stroke="#107828"/>
    </svg>
  </section>

  <aside class="side">
    <div class="sgrp first"><svg class="ic"><use href="#eq"/></svg><svg class="ic"><use href="#ball"/></svg><svg class="ic"><use href="#open"/></svg><svg class="ic"><use href="#axes"/></svg><svg class="ic"><use href="#cube"/></svg><svg class="ic"><use href="#new"/></svg><svg class="ic"><use href="#saves"/></svg><svg class="ic"><use href="#save"/></svg></div>
    <div class="sgrp"><svg class="ic"><use href="#bup"/></svg><svg class="ic"><use href="#brev"/></svg><svg class="ic"><use href="#bcurve"/></svg><svg class="ic"><use href="#bdown"/></svg><span class="pair"><svg class="ic"><use href="#bred"/></svg><i class="dd"></i></span><hr><svg class="ic"><use href="#bbox"/></svg><span class="pair"><svg class="ic"><use href="#bbool"/></svg><i class="dd"></i></span><svg class="ic"><use href="#bdraft"/></svg><svg class="ic"><use href="#bplate"/></svg><svg class="ic"><use href="#bblock"/></svg><hr><svg class="ic"><use href="#bflame"/></svg><svg class="ic"><use href="#bgrid"/></svg><svg class="ic"><use href="#bprint"/></svg></div>
  </aside>
</main>

<footer class="status">
  <span class="msg">请稍候....</span>
  <button>3D</button><button>屏幕视角</button><button>构图面</button>
  <label for="z">Z</label>
  <span class="combo zbox"><input id="z" value="0.0"></span>
  <button class="color">10</button><i class="dd big"></i>
  <label for="lv">层别</label>
  <span class="combo level"><select id="lv"><option>1</option></select></span>
  <button class="attr">属性</button>
  <span class="combo point"><select aria-label="点型"><option>＊</option></select></span>
  <span class="combo ln thick"><select aria-label="线宽"><option></option></select></span>
  <span class="combo ln"><select aria-label="线型"><option></option></select></span>
  <button class="wide">WCS</button><button class="wide">群组</button><button class="attr">!</button><button class="attr">?</button>
</footer>

<div class="taskbar">
  <button class="start"><svg class="ic"><use href="#win"/></svg>开始</button>
  <div class="quick"><svg class="ic"><use href="#hol"/></svg><svg class="ic"><use href="#sw"/></svg><svg class="ic"><use href="#cd"/></svg></div>
  <div class="tasks">
    <button><svg class="ic"><use href="#folder"/></svg><b>章节</b></button>
    <button><svg class="ic"><use href="#word"/></svg><b>第13章</b>&nbsp; ...</button>
    <button class="on"><svg class="ic"><use href="#mcx"/></svg>Mastercam...</button>
    <button><svg class="ic"><use href="#cam"/></svg>Camtasia ...</button>
  </div>
  <svg class="ic lone"><use href="#eapp"/></svg>
  <div class="tray"><svg class="ic"><use href="#cam"/></svg><svg class="ic"><use href="#camr"/></svg><svg class="ic"><use href="#net"/></svg><svg class="ic"><use href="#vol"/></svg><svg class="ic"><use href="#scan"/></svg><svg class="ic"><use href="#shield"/></svg><time>10:57</time></div>
</div>

<section class="dialog" role="dialog" aria-labelledby="dt">
  <header><h2 id="dt">实体切削验证</h2><button aria-label="关闭"><svg viewBox="0 0 14 14"><path d="M3 3l8 8M11 3l-8 8" stroke="#fff" stroke-width="2"/></svg></button></header>
  <div class="transport"><svg><use href="#rew"/></svg><svg><use href="#play"/></svg><svg><use href="#stop"/></svg><svg><use href="#step"/></svg><svg><use href="#ff"/></svg></div>
  <div class="modes"><button aria-label="刀具"><svg><use href="#v1"/></svg></button><button aria-label="刀柄"><svg><use href="#v2"/></svg></button><button aria-label="夹头"><svg><use href="#v3"/></svg></button></div>
  <fieldset class="show">
    <legend>显示控制</legend>
    <div class="field"><label for="a">每次手动时的位</label><input id="a" value="1"></div>
    <div class="field"><label for="b">每次重绘时的位移</label><input id="b" value="100000"></div>
    <div class="speed"><label for="sp">速度</label><span class="ticks"><input id="sp" type="range" disabled></span><span>品质</span></div>
    <label class="ck"><input type="checkbox" checked>每个刀具路径后更新</label>
  </fieldset>
  <fieldset class="halt">
    <legend>停止选项</legend>
    <label class="ck"><input type="checkbox">撞刀停止</label>
    <label class="ck"><input type="checkbox">换刀停止</label>
    <label class="ck"><input type="checkbox">完成每个操作后停止</label>
  </fieldset>
  <label class="ck detail"><input type="checkbox">详细模式</label>
  <div class="tools"><button disabled aria-label="设置"><svg><use href="#blob"/></svg></button><button disabled aria-label="剪切"><svg><use href="#cut"/></svg></button><button class="on" aria-label="测量"><svg><use href="#ruler"/></svg></button><button disabled aria-label="缩放"><svg><use href="#flip"/></svg></button><button disabled aria-label="保存"><svg><use href="#gsave"/></svg></button></div>
  <div class="tools pace"><button disabled aria-label="慢"><svg><use href="#walk"/></svg></button><input type="range" value="100" aria-label="速度"><button disabled aria-label="快"><svg><use href="#run"/></svg></button></div>
  <dl class="info"><dt>刀具路径:</dt><dd>曲面精加工平行铣削</dd><dt>刀具编号:</dt><dd>244</dd><dt>刀具名称:</dt><dd>&nbsp; 10. BALL ENDMILL</dd></dl>
  <output class="pct">100%</output>
  <div class="answer"><button aria-label="确定"><svg><use href="#chk"/></svg></button><button aria-label="取消"><svg><use href="#redx"/></svg></button><button aria-label="帮助"><svg><use href="#help"/></svg></button></div>
</section>
</body>
</html>
```
FILE: styles.css
```css
* { box-sizing: border-box; }
body {
  margin: 0;
  height: 100vh;
  display: flex;
  flex-direction: column;
  overflow: hidden;
  position: relative;
  background: #ece9d8;
  color: #000;
  font: 9px/12px "Liberation Sans", "Noto Sans CJK SC", sans-serif;
}
button, input, select { font: inherit; color: inherit; margin: 0; padding: 0; border-radius: 0; }
button { display: flex; align-items: center; justify-content: center; white-space: nowrap; }
.sprite { position: absolute; width: 0; height: 0; }
svg { display: block; flex: none; }
.ic { width: 14px; height: 14px; }

/* title bar */
.title {
  flex: none;
  height: 20px;
  display: flex;
  align-items: center;
  padding: 0 2px;
  gap: 1px;
  background: linear-gradient(#a4bcf6, #7896ea 25%, #7c9cf0 80%, #6c88dc);
  color: #f4f8ff;
}
.title h1 {
  flex: 1;
  margin: 0;
  overflow: hidden;
  white-space: nowrap;
  font: bold 10px/20px "Liberation Mono", "Noto Sans CJK SC", monospace;
}
.title b { font-size: 12px; }
.winbtns { display: flex; gap: 3px; }
.winbtns button { width: 16px; height: 16px; border: 1px solid #dce6ff; border-radius: 3px; background: #4a74e0; }
.winbtns .x { background: #b86878; }
.winbtns svg { width: 14px; height: 14px; }

/* menu */
.menu {
  flex: none;
  height: 17px;
  display: flex;
  gap: 8px;
  padding: 2px 3px;
  border-bottom: 1px solid #b4b29c;
  font-family: "Liberation Mono", "Noto Sans CJK SC", monospace;
  white-space: nowrap;
}
.menu a { color: #918f80; text-decoration: none; }

/* toolbars */
.bar { flex: none; height: 23px; display: flex; border-bottom: 1px solid #bcbaa6; overflow: hidden; background: #ece9d8; }
.grp { position: relative; display: flex; align-items: center; padding: 0 0 0 10px; border-right: 1px solid #aeac98; flex: none; }
.grp::before { content: ""; position: absolute; left: 4px; top: 3px; bottom: 3px; width: 2px; border-left: 1px solid #fff; border-right: 1px solid #a8a692; }
.lead { flex: 1; padding-left: 7px; }
.lead::before { left: 2px; }
.last { margin-right: 3px; }
.fill { flex: 1; }
.t { width: 18px; height: 18px; padding: 2px; }
.raised { border: 1px solid #dddac6; border-color: #f6f4e4 #cac8b2 #cac8b2 #f6f4e4; padding: 1px; }
.sep { width: 8px; height: 16px; border-left: 1px solid #c0beaa; margin-left: 2px; margin-right: -2px; }
.sep.none { width: 4px; border: 0; margin: 0; }
.dd { width: 10px; height: 10px; display: flex; align-items: center; justify-content: center; }
.dd::before { content: ""; border: 3px solid transparent; border-top-color: #181818; border-bottom: 0; }
.dd.off::before { border-top-color: #a8a692; }
.dd.big { width: 12px; }
.dd.big::before { border-width: 4px 4px 0; }
.cutoff { width: 92px; overflow: hidden; border: 0; }
.ribbon { height: 25px; background: #f1eecf; }
.lead3 { flex: 1; display: flex; align-items: center; padding: 0 6px 0 3px; gap: 1px; border-right: 1px solid #aeac98; }
.key { width: 18px; height: 16px; border: 1px solid #d0cebc; background: #f6f4ea; text-decoration: underline; }
.sel { gap: 1px; padding-right: 4px; margin-right: 24px; }
.txt { width: 36px; height: 17px; border: 1px solid #c8c6b4; background: #f4f2e6; color: #9c9a8c; margin-right: 6px; }
.q { width: 17px; height: 17px; border: 1px solid #404c68; border-radius: 3px; background: #e4e6dc; }
.strip { flex: none; height: 22px; display: flex; align-items: center; justify-content: space-between; padding: 0 44px 0 1px; background: #ffffc0; }

.combo { display: flex; position: relative; height: 17px; border: 1px solid #b0c0d4; background: #fff; }
.combo select, .combo input { appearance: none; width: 100%; min-width: 0; border: 0; background: none; padding: 0 0 0 3px; outline: 0; opacity: 1; }
.combo::after {
  content: "";
  position: absolute;
  right: 0; top: 0; bottom: 0;
  width: 11px;
  pointer-events: none;
  background:
    linear-gradient(45deg, transparent 40%, #284888 40% 64%, transparent 64%) 2px 5px / 4px 4px no-repeat,
    linear-gradient(-45deg, transparent 40%, #284888 40% 64%, transparent 64%) 5px 5px / 4px 4px no-repeat,
    #bcd0fa;
}
.combo.off { border-color: #ccc8b4; background: #f4f2e4; color: #a09e90; }
.combo.off::after { filter: grayscale(1); opacity: 0.35; }
.coord { width: 56px; margin-left: 2px; }
.scope { width: 55px; margin-right: 6px; }

/* work area */
.work { flex: 1; min-height: 0; display: flex; border-top: 1px solid #303028; }
.panel { width: 188px; flex: none; display: flex; flex-direction: column; padding: 3px 5px 6px 3px; }
.tabs { display: flex; height: 17px; align-items: flex-end; }
.tabs button { height: 15px; padding: 0 5px; border: 1px solid #a4b0b0; border-bottom: 0; background: #f6f5ee; border-radius: 2px 2px 0 0; }
.tabs button.on { height: 17px; padding: 0 3px; border-top: 2px solid #f0a020; }
.tabs button:empty { width: 30px; }
.ops { height: 23px; display: flex; align-items: center; gap: 4px; padding-left: 6px; }
.ops .sep { margin: 0; width: 1px; }
.treebox { flex: 1; min-height: 0; display: flex; flex-direction: column; justify-content: space-between; border: 1px solid #8ca0a8; background: #fff; }
.tree { list-style: none; margin: 0; padding: 0 0 0 3px; height: 175px; display: grid; grid-auto-rows: 1fr; overflow: hidden; }
.tree li { display: flex; align-items: center; white-space: nowrap; min-height: 0; }
.tree .ic { width: 13px; height: 12px; margin: 0 3px 0 0; }
.ex { width: 7px; height: 7px; margin: 0 4px; border: 1px solid #8890a0; font: 7px/5px "Liberation Sans", sans-serif; text-align: center; background: #fff; }
.g { align-self: stretch; width: 8px; margin-left: 7px; border-left: 1px dotted #a0a090; }
.g.n { border-color: transparent; }
.g.h { background: linear-gradient(#b0b0a0, #b0b0a0) 0 50% / 6px 1px no-repeat; border-color: transparent; }
.tree mark { background: #2c64c8; color: #fff; }
.hscroll { display: flex; height: 14px; background: #f4f4f8; }
.hscroll button { width: 13px; border: 1px solid #b4c8f4; background: #c8d8fc; }
.hscroll svg { width: 11px; height: 11px; }
.hscroll .thumb { width: 50%; margin: 0 auto 0 1px; border: 1px solid #a8bcf0; border-radius: 2px; background: #c4d6fd; }
.view { flex: 1; min-width: 0; background: #000; }
.view svg { width: 100%; height: 100%; }
.side { width: 35px; flex: none; overflow: hidden; padding: 3px 2px 0 3px; }
.sgrp { position: relative; display: flex; flex-direction: column; align-items: flex-start; gap: 3px; padding: 12px 0 0 2px; }
.sgrp::before { content: ""; position: absolute; top: 4px; left: 0; right: 2px; height: 2px; border-top: 1px solid #fff; border-bottom: 1px solid #a8a692; }
.sgrp.first { height: 185px; padding-top: 11px; border-right: 1px solid #a8a692; border-bottom: 1px solid #a8a692; margin-right: 6px; }
.sgrp hr { width: 100%; margin: 0; border: 0; border-top: 1px solid #b0ae9a; }
.pair { display: flex; align-items: center; }

/* status bar */
.status { flex: none; height: 20px; display: flex; align-items: center; gap: 4px; padding: 2px 0 1px; border-top: 1px solid #fff; background: #ece9d8; white-space: nowrap; }
.status .msg { width: 102px; }
.status button { height: 15px; padding: 0 2px; border: 1px solid #cac8b4; background: #f2f0e2; }
.status button.attr { padding: 0 5px; }
.status label[for="z"] { margin-left: 6px; }
.status .combo { height: 15px; flex: none; }
.zbox { width: 87px; }
.zbox input { max-width: 16px; height: 11px; margin: 1px; padding: 0 1px; background: #2c64c8; color: #fff; }
.status button.color { width: 43px; background: #00f400; border-color: #00f400; color: #205010; }
.status .level { width: 1px; flex: 1; }
.point { width: 24px; }
.point select { padding: 0; }
.ln { width: 48px; }
.ln::before { content: ""; position: absolute; left: 2px; right: 13px; top: 7px; border-top: 1px solid #000; }
.ln.thick::before { border-top-width: 2px; }
.status button.wide { padding: 0 8px; }

/* taskbar */
.taskbar { flex: none; height: 22px; display: flex; align-items: center; background: linear-gradient(#4a88f4, #2058e0 15%, #225ce4 85%, #1840b0); color: #fff; }
.start { width: 75px; height: 22px; gap: 5px; border: 0; border-radius: 0 8px 8px 0; background: linear-gradient(#6cc06c, #38983c 20%, #389c3c 80%, #207024); color: #fff; font: italic 14px/20px "Noto Sans CJK SC", sans-serif; }
.quick { width: 197px; display: flex; gap: 4px; padding-left: 9px; }
.tasks { display: flex; flex: 1; gap: 2px; }
.tasks button { flex: 1; width: 1px; height: 20px; justify-content: flex-start; gap: 3px; padding-left: 7px; border: 1px solid #2c64dc; border-radius: 2px; background: linear-gradient(#5c98fc, #3c80f4 20%, #3878ec); color: #fff; font: 8px/18px "Liberation Mono", "Noto Sans CJK SC", monospace; }
.tasks b { font-size: 9px; font-weight: 400; }
.tasks button.on { background: #1c48b4; }
.lone { margin: 0 16px 0 6px; }
.tray { display: flex; align-items: center; gap: 2px; height: 22px; padding: 0 5px 0 5px; background: linear-gradient(#40b8f8, #1490e8 20%, #1890ec 85%, #1068c0); font-size: 10px; }

/* verification dialog */
.dialog { position: absolute; left: 88px; top: 37px; width: 171px; border: 3px solid #1848d0; border-top: 0; border-radius: 5px 5px 0 0; padding: 0 6px 12px 7px; background: #ece9d8; }
.dialog header { display: flex; align-items: center; justify-content: space-between; height: 24px; margin: 0 -9px 0 -10px; padding: 0 2px 0 5px; border-radius: 5px 5px 0 0; background: linear-gradient(#3078f0, #0c50e0 20%, #0c58ec 80%, #0838b8); }
.dialog h2 { margin: 0; color: #fff; font: bold 11px/20px "Noto Sans CJK SC", sans-serif; }
.dialog header button { width: 17px; height: 17px; border: 1px solid #f8d8cc; border-radius: 3px; background: #dc5434; }
.dialog header svg { width: 15px; height: 15px; }
.transport { display: flex; justify-content: space-between; align-items: center; height: 38px; padding: 0 10px 0 8px; }
.transport svg, .tools svg, .answer svg { width: 16px; height: 16px; }
.modes { display: flex; justify-content: center; gap: 5px; height: 26px; }
.modes button { width: 25px; height: 25px; border: 1px solid #405068; border-radius: 3px; background: #f4f4ee; }
.modes svg { width: 22px; height: 22px; }
fieldset { margin: 0; min-width: 0; border: 1px solid #d0ceb8; border-radius: 3px; padding: 2px 7px 6px 5px; }
legend { height: 12px; padding: 0 1px; color: #1848b8; }
.show { margin-top: 3px; }
.halt { margin-top: 5px; padding-top: 4px; }
.field { display: flex; justify-content: space-between; align-items: center; height: 20px; padding-left: 12px; white-space: nowrap; }
.field input { width: 48px; height: 18px; flex: none; border: 1px solid #8098ac; background: #fff; padding: 0 2px; }
.speed { display: flex; justify-content: space-between; align-items: center; height: 40px; padding: 0 13px 0 4px; color: #a8a594; }
.ticks { display: grid; align-items: center; width: 52px; height: 24px; --marks: repeating-linear-gradient(90deg, #a8a594 0 1px, transparent 1px 11px); background: var(--marks) 4px 0 / 45px 2px no-repeat, var(--marks) 4px 100% / 45px 2px no-repeat; }
input[type="range"] { appearance: none; width: 100%; height: 18px; background: linear-gradient(#a09e8c, #a09e8c) 0 50% / 100% 1px no-repeat; }
input[type="range"]::-webkit-slider-thumb { appearance: none; width: 8px; height: 16px; border: 1px solid #aaa894; border-radius: 2px; background: #f4f2e6; }
.ck { display: flex; align-items: center; gap: 2px; height: 18px; white-space: nowrap; }
.show .ck { height: 16px; }
.ck input { appearance: none; width: 10px; height: 10px; border: 1px solid #285078; background: #fafaf6; display: grid; }
.ck input:checked::before { content: ""; width: 6px; height: 3px; margin: 1px; border: solid #209020; border-width: 0 0 2px 2px; transform: rotate(-45deg); }
.detail { margin: 3px 0 4px 5px; }
.tools { display: flex; justify-content: space-between; height: 24px; padding: 0 6px 0 6px; }
.tools button { width: 23px; height: 23px; border: 1px solid #c4c2ae; background: #ece9d8; }
.tools button.on { border: 1px solid #304868; border-radius: 3px; background: #fbfaf4; }
.pace { margin-top: 10px; }
.pace input { width: 61px; height: 20px; }
.pace input::-webkit-slider-thumb { border: 1px solid #607870; border-top: 2px solid #30a048; border-bottom: 2px solid #30a048; }
.info { display: grid; grid-template-columns: 50px 1fr; grid-auto-rows: 16px; margin: 9px 0 5px; padding: 1px 7px; border: 1px solid #d0ceb8; border-radius: 3px; line-height: 16px; white-space: nowrap; }
.info dd { margin: 0; }
.pct { display: block; width: 28px; height: 19px; margin: 0 auto 5px; border: 1px solid #a8a692; line-height: 16px; text-align: center; color: #a5a290; }
.answer { display: flex; justify-content: space-between; padding: 0 6px 0 9px; }
.answer button { width: 42px; height: 22px; border: 1px solid #304868; border-radius: 3px; background: #f6f5ee; }
```
